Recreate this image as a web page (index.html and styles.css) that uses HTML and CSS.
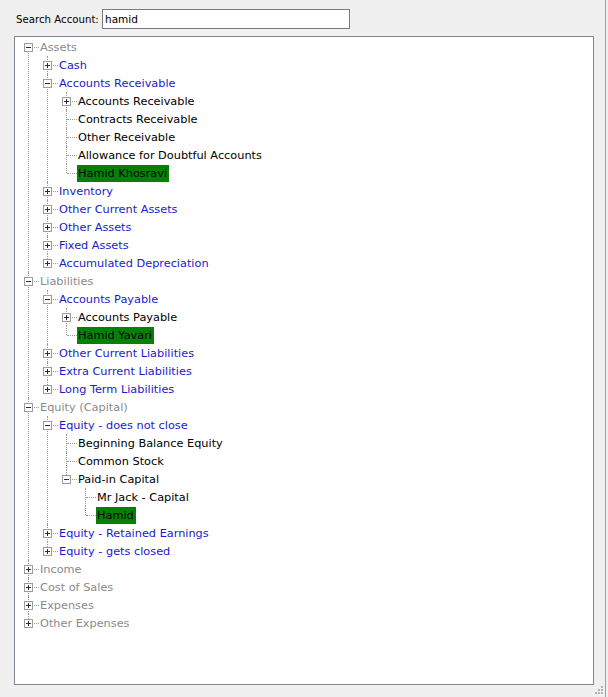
FILE: index.html
```html
<!DOCTYPE html>
<html>
<head>
<meta charset="utf-8">
<title>Search Account</title>
<link rel="stylesheet" href="styles.css">
</head>
<body>
<div class="window">
  <div class="search">
    <label class="search-label" for="q">Search Account:</label>
    <input class="search-input" id="q" type="text" value="hamid">
  </div>
  <div class="tree">
    <ul class="tree-root">
      <li>
        <div class="row"><span class="toggle"></span><span class="label l0">Assets</span></div>
        <ul>
          <li><div class="row"><span class="toggle plus"></span><span class="label l1">Cash</span></div></li>
          <li>
            <div class="row"><span class="toggle"></span><span class="label l1">Accounts Receivable</span></div>
            <ul>
              <li><div class="row"><span class="toggle plus"></span><span class="label l2">Accounts Receivable</span></div></li>
              <li><div class="row"><span class="label l2">Contracts Receivable</span></div></li>
              <li><div class="row"><span class="label l2">Other Receivable</span></div></li>
              <li><div class="row"><span class="label l2">Allowance for Doubtful Accounts</span></div></li>
              <li><div class="row"><span class="label l2 sel">Hamid Khosravi</span></div></li>
            </ul>
          </li>
          <li><div class="row"><span class="toggle plus"></span><span class="label l1">Inventory</span></div></li>
          <li><div class="row"><span class="toggle plus"></span><span class="label l1">Other Current Assets</span></div></li>
          <li><div class="row"><span class="toggle plus"></span><span class="label l1">Other Assets</span></div></li>
          <li><div class="row"><span class="toggle plus"></span><span class="label l1">Fixed Assets</span></div></li>
          <li><div class="row"><span class="toggle plus"></span><span class="label l1">Accumulated Depreciation</span></div></li>
        </ul>
      </li>
      <li>
        <div class="row"><span class="toggle"></span><span class="label l0">Liabilities</span></div>
        <ul>
          <li>
            <div class="row"><span class="toggle"></span><span class="label l1">Accounts Payable</span></div>
            <ul>
              <li><div class="row"><span class="toggle plus"></span><span class="label l2">Accounts Payable</span></div></li>
              <li><div class="row"><span class="label l2 sel">Hamid Yavari</span></div></li>
            </ul>
          </li>
          <li><div class="row"><span class="toggle plus"></span><span class="label l1">Other Current Liabilities</span></div></li>
          <li><div class="row"><span class="toggle plus"></span><span class="label l1">Extra Current Liabilities</span></div></li>
          <li><div class="row"><span class="toggle plus"></span><span class="label l1">Long Term Liabilities</span></div></li>
        </ul>
      </li>
      <li>
        <div class="row"><span class="toggle"></span><span class="label l0">Equity (Capital)</span></div>
        <ul>
          <li>
            <div class="row"><span class="toggle"></span><span class="label l1">Equity - does not close</span></div>
            <ul>
              <li><div class="row"><span class="label l2">Beginning Balance Equity</span></div></li>
              <li><div class="row"><span class="label l2">Common Stock</span></div></li>
              <li>
                <div class="row"><span class="toggle"></span><span class="label l2">Paid-in Capital</span></div>
                <ul>
                  <li><div class="row"><span class="label l2">Mr Jack - Capital</span></div></li>
                  <li><div class="row"><span class="label l2 sel">Hamid</span></div></li>
                </ul>
              </li>
            </ul>
          </li>
          <li><div class="row"><span class="toggle plus"></span><span class="label l1">Equity - Retained Earnings</span></div></li>
          <li><div class="row"><span class="toggle plus"></span><span class="label l1">Equity - gets closed</span></div></li>
        </ul>
      </li>
      <li><div class="row"><span class="toggle plus"></span><span class="label l0">Income</span></div></li>
      <li><div class="row"><span class="toggle plus"></span><span class="label l0">Cost of Sales</span></div></li>
      <li><div class="row"><span class="toggle plus"></span><span class="label l0">Expenses</span></div></li>
      <li><div class="row"><span class="toggle plus"></span><span class="label l0">Other Expenses</span></div></li>
    </ul>
  </div>
  <svg class="grip" width="12" height="12" viewBox="0 0 12 12">
    <rect x="9" y="1" width="2" height="2" fill="#b4b4b4"/>
    <rect x="6" y="4" width="2" height="2" fill="#b4b4b4"/>
    <rect x="9" y="4" width="2" height="2" fill="#b4b4b4"/>
    <rect x="3" y="7" width="2" height="2" fill="#b4b4b4"/>
    <rect x="6" y="7" width="2" height="2" fill="#b4b4b4"/>
    <rect x="9" y="7" width="2" height="2" fill="#b4b4b4"/>
  </svg>
</div>
</body>
</html>
```

FILE: styles.css
```css
* { box-sizing: border-box; }

html, body {
  margin: 0;
  padding: 0;
}

body {
  width: 608px;
  height: 697px;
  overflow: hidden;
  background: #f0f0f0;
  font-family: "DejaVu Sans", "Liberation Sans", sans-serif;
  font-size: 11px;
  color: #000;
}

.window {
  position: relative;
  width: 606px;
  height: 697px;
  padding: 9px 0 0 14px;
  border-right: 1px solid #a0a0a0;
  display: flex;
  flex-direction: column;
}

.search {
  display: flex;
  align-items: center;
  height: 20px;
  padding-left: 2px;
}

.search-label {
  width: 86px;
  font-size: 10.2px;
  white-space: nowrap;
}

.search-input {
  width: 248px;
  height: 20px;
  margin: 0;
  padding: 0 0 0 2px;
  border: 1px solid #7a7a7a;
  border-radius: 0;
  background: #fff;
  font-family: "DejaVu Sans", sans-serif;
  font-size: 10.5px;
  color: #000;
  outline: none;
}

.tree {
  margin-top: 7px;
  width: 580px;
  height: 649px;
  background: #fff;
  border: 1px solid #828790;
  padding: 1px 0 0 13px;
}

.tree ul {
  list-style: none;
  margin: 0;
  padding: 0;
}

.tree li ul {
  padding-left: 19px;
}

.tree li {
  position: relative;
}

.tree li::before {
  content: "";
  position: absolute;
  left: 0;
  top: 0;
  bottom: 0;
  border-left: 1px dotted #9a9a9a;
}

.tree li:last-child::before {
  bottom: auto;
  height: 9px;
}

.tree-root > li:first-child::before {
  top: 9px;
}

.row {
  position: relative;
  height: 18px;
  padding-left: 11px;
  display: flex;
  align-items: flex-start;
}

.row::before {
  content: "";
  position: absolute;
  left: 1px;
  top: 9px;
  width: 10px;
  border-top: 1px dotted #9a9a9a;
}

.toggle {
  position: absolute;
  left: -4px;
  top: 5px;
  width: 9px;
  height: 9px;
  border: 1px solid #9c9c9c;
  background: #fff;
  z-index: 1;
}

.toggle::before {
  content: "";
  position: absolute;
  left: 1px;
  top: 3px;
  width: 5px;
  height: 1px;
  background: #2a2a3a;
}

.toggle.plus::after {
  content: "";
  position: absolute;
  left: 3px;
  top: 1px;
  width: 1px;
  height: 5px;
  background: #2a2a3a;
}

.label {
  display: block;
  height: 17px;
  margin-top: 1px;
  line-height: 17px;
  padding: 0 2px 0 1px;
  font-size: 11.3px;
  white-space: nowrap;
}

.l0 { color: #8a8a8a; }
.l1 { color: #1a1acd; }
.l2 { color: #000; }

.sel {
  background: #068006;
  color: #000;
}

.grip {
  position: absolute;
  right: 1px;
  bottom: 0;
}
```
